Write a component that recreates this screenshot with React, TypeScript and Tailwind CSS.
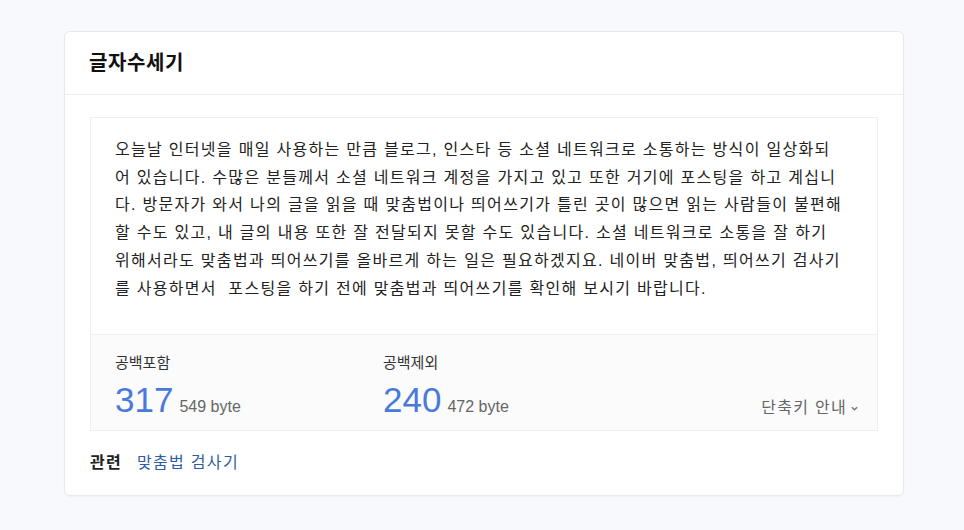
const lines = [
  "오늘날 인터넷을 매일 사용하는 만큼 블로그, 인스타 등 소셜 네트워크로 소통하는 방식이 일상화되",
  "어 있습니다. 수많은 분들께서 소셜 네트워크 계정을 가지고 있고 또한 거기에 포스팅을 하고 계십니",
  "다. 방문자가 와서 나의 글을 읽을 때 맞춤법이나 띄어쓰기가 틀린 곳이 많으면 읽는 사람들이 불편해",
  "할 수도 있고, 내 글의 내용 또한 잘 전달되지 못할 수도 있습니다. 소셜 네트워크로 소통을 잘 하기",
  "위해서라도 맞춤법과 띄어쓰기를 올바르게 하는 일은 필요하겠지요. 네이버 맞춤법, 띄어쓰기 검사기",
  "를 사용하면서  포스팅을 하기 전에 맞춤법과 띄어쓰기를 확인해 보시기 바랍니다.",
];

function Stat(props: { label: string; count: number; bytes: number }) {
  return (
    <div className="w-[268px]">
      <div className="text-[15px] leading-5 text-[#333]">{props.label}</div>
      <div className="mt-[7px] flex items-baseline gap-[6px]">
        <span className="text-[35px] leading-[40px] text-[#4a79dc]">{props.count}</span>
        <span className="text-[16px] text-[#666]">{props.bytes} byte</span>
      </div>
    </div>
  );
}

export default function App() {
  return (
    <div className="min-h-[530px] bg-[#f8f9fc] pt-[31px] font-['Liberation_Sans','Noto_Sans_CJK_KR',sans-serif]">
      <div className="ml-[64px] w-[840px] rounded-md border border-[#e8e9ee] bg-white shadow-[0_1px_2px_rgba(0,0,0,0.04)]">
        <div className="flex h-[63px] items-center border-b border-[#ececf0] px-[24px]">
          <h1 className="text-[20px] font-bold tracking-[0.6px] text-[#111]">글자수세기</h1>
        </div>
        <div className="mx-[25px] mt-[22px] border border-[#eeeeef]">
          <div className="h-[216px] px-[24px] pt-[18px] text-[16px] leading-[27.7px] tracking-[1.3px] text-[#222]">
            {lines.map((l, i) => (
              <div key={i} className="whitespace-pre">{l}</div>
            ))}
          </div>
          <div className="flex h-[96px] items-start border-t border-[#f0f0f2] bg-[#fbfbfc] pl-[24px] pr-[18px] pt-[18px]">
            <Stat label="공백포함" count={317} bytes={549} />
            <Stat label="공백제외" count={240} bytes={472} />
            <div className="ml-auto mt-[43px] flex items-center gap-[3px] text-[16px] tracking-[1.3px] text-[#666]">
              <span>단축키 안내</span>
              <svg width="9" height="9" viewBox="0 0 10 10" fill="none" stroke="#777" strokeWidth="1.6">
                <path d="M2 3.5 5 6.5 8 3.5" />
              </svg>
            </div>
          </div>
        </div>
        <div className="flex h-[64px] items-center gap-[15px] px-[25px] text-[16px] tracking-[1.3px]">
          <span className="font-bold text-[#222]">관련</span>
          <a className="text-[#2f5d9e]" href="#">맞춤법 검사기</a>
        </div>
      </div>
    </div>
  );
}
